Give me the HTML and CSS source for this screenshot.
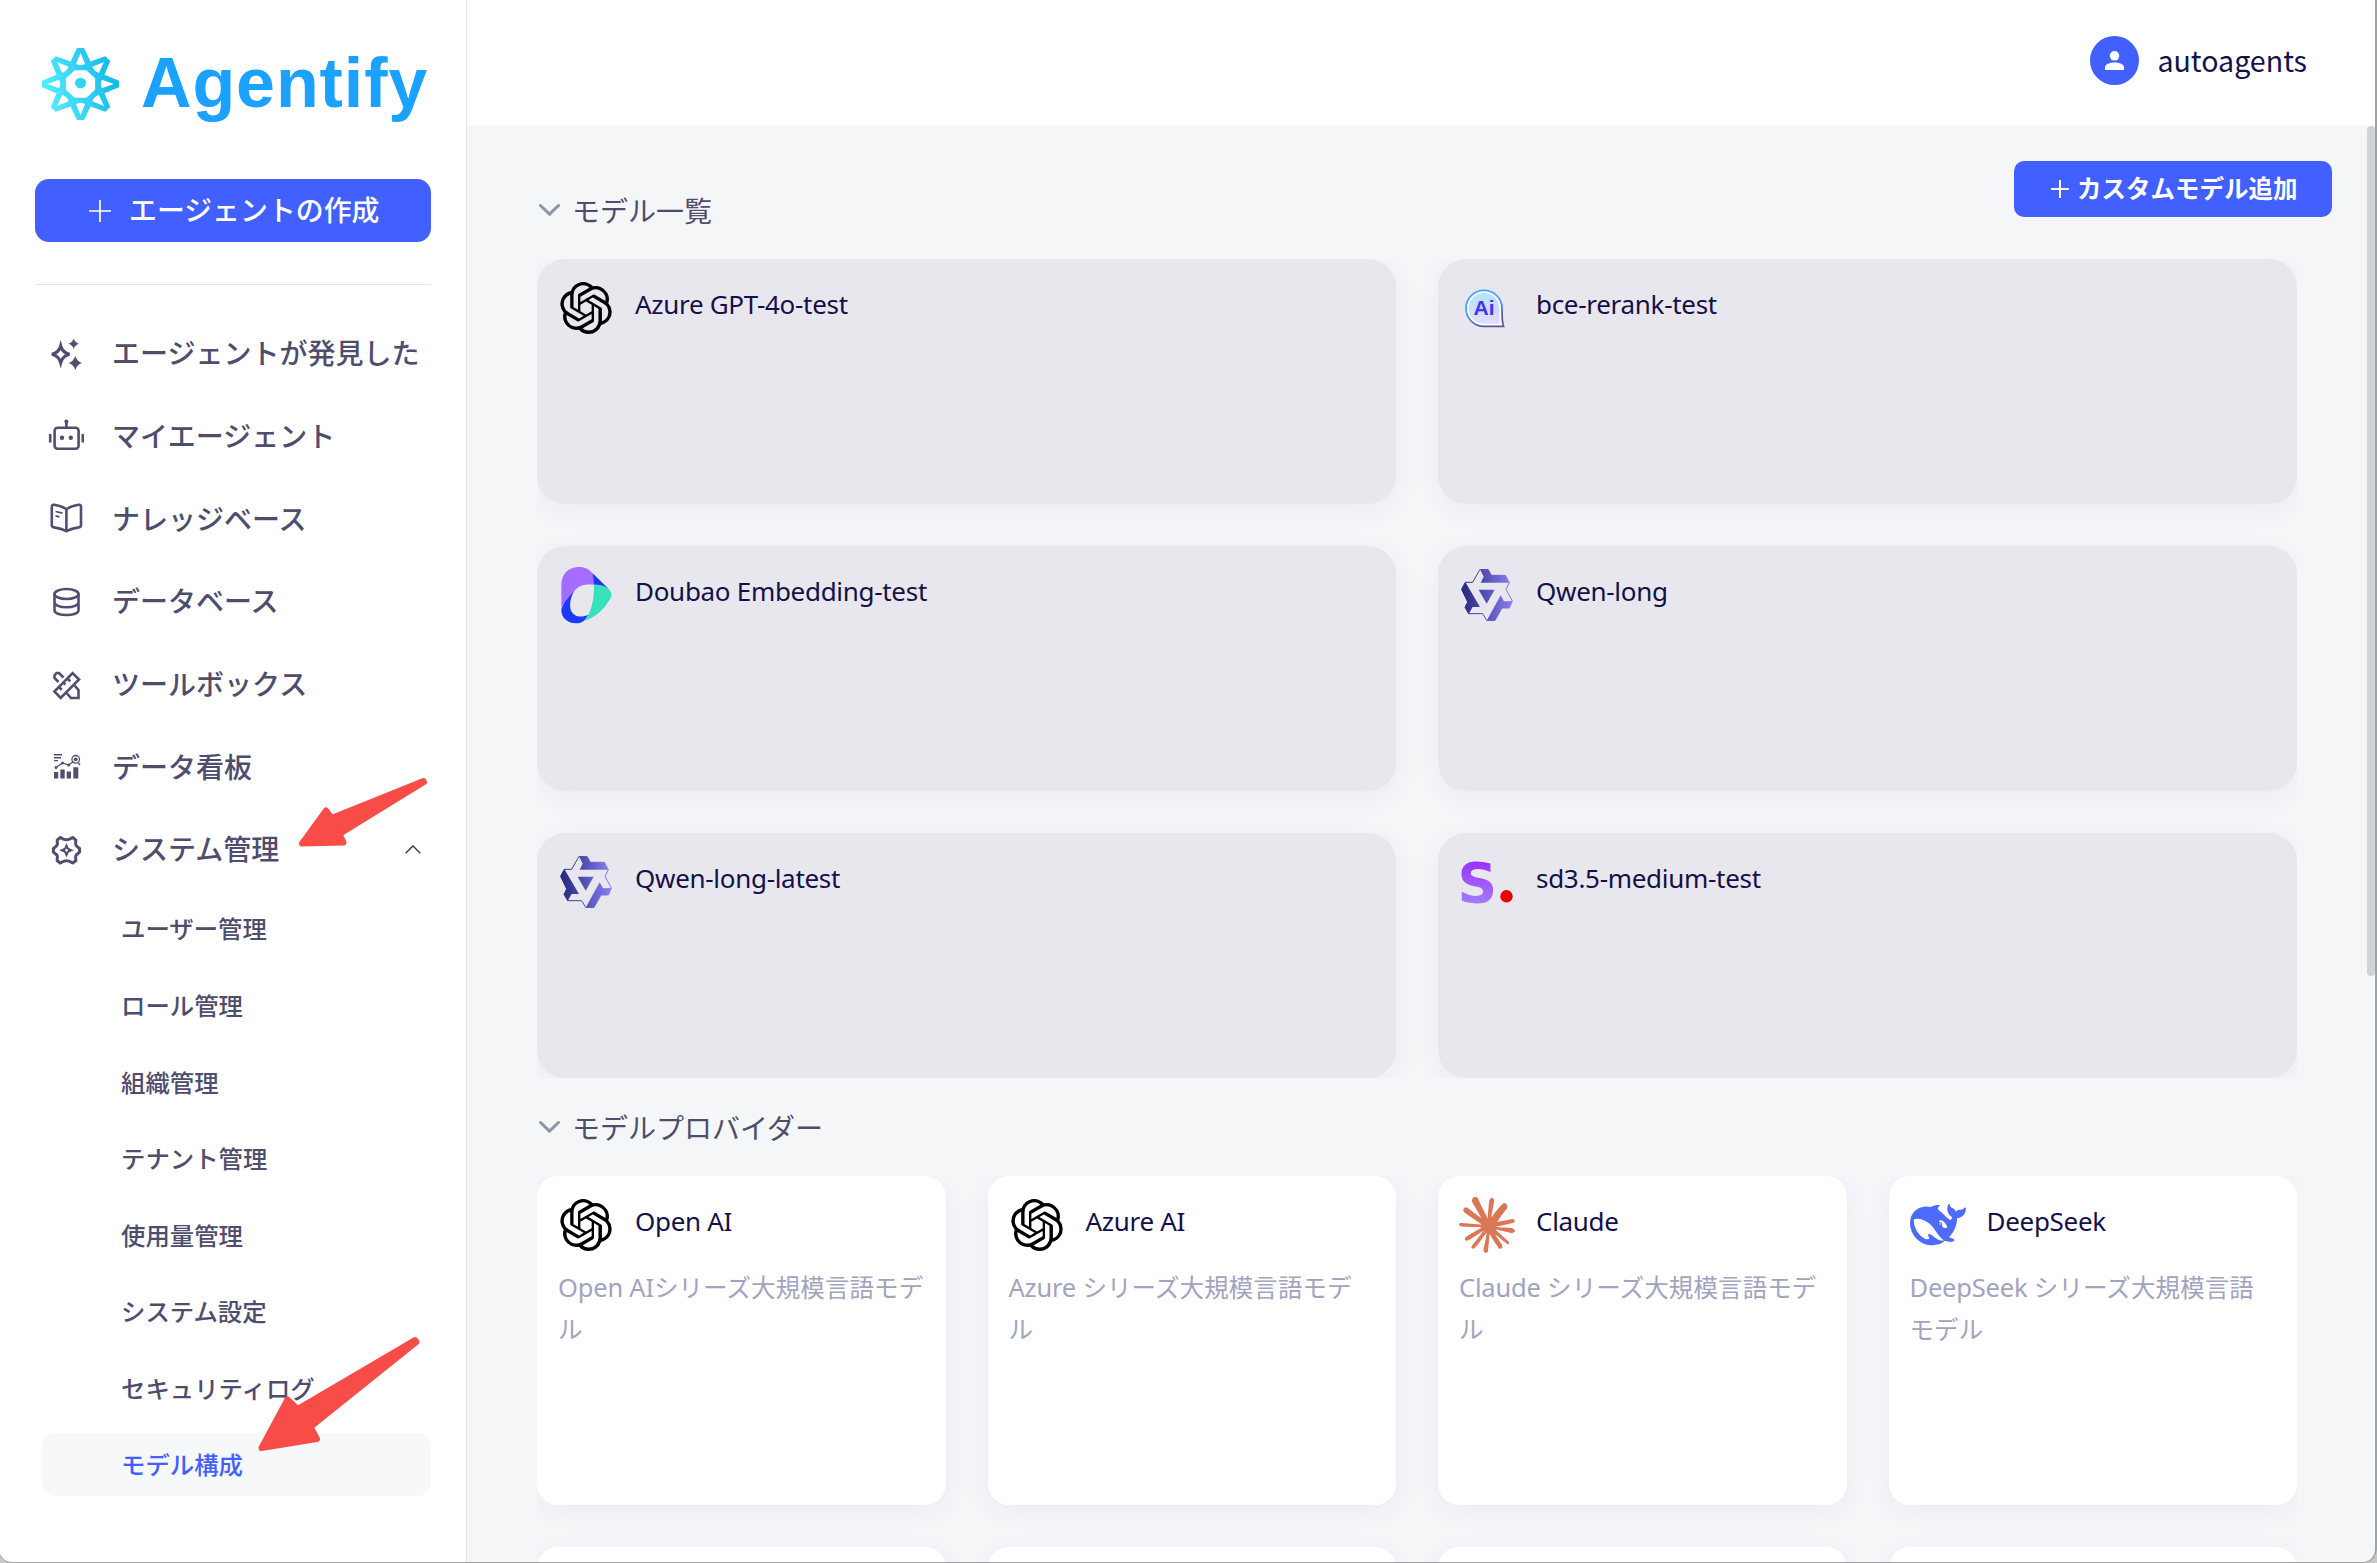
FILE: index.html
```html
<!DOCTYPE html>
<html lang="ja">
<head>
<meta charset="utf-8">
<title>Agentify</title>
<link rel="stylesheet" href="styles.css">
</head>
<body>
<svg class="defs" width="0" height="0" aria-hidden="true">
  <defs>
    <linearGradient id="qwenFill" gradientUnits="userSpaceOnUse" x1="0" y1="0" x2="154" y2="0"><stop offset="0" stop-color="#26277a"/><stop offset="0.5" stop-color="#5553b8"/><stop offset="1" stop-color="#8a82f6"/></linearGradient>
    <symbol id="openai" viewBox="0 0 24 24"><path d="M22.2819 9.8211a5.9847 5.9847 0 0 0-.5157-4.9108 6.0462 6.0462 0 0 0-6.5098-2.9A6.0651 6.0651 0 0 0 4.9807 4.1818a5.9847 5.9847 0 0 0-3.9977 2.9 6.0462 6.0462 0 0 0 .7427 7.0966 5.98 5.98 0 0 0 .511 4.9107 6.051 6.051 0 0 0 6.5146 2.9001A5.9847 5.9847 0 0 0 13.2599 24a6.0557 6.0557 0 0 0 5.7718-4.2058 5.9894 5.9894 0 0 0 3.9977-2.9001 6.0557 6.0557 0 0 0-.7475-7.0729zm-9.022 12.6081a4.4755 4.4755 0 0 1-2.8764-1.0408l.1419-.0804 4.7783-2.7582a.7948.7948 0 0 0 .3927-.6813v-6.7369l2.02 1.1686a.071.071 0 0 1 .038.052v5.5826a4.504 4.504 0 0 1-4.4945 4.4944zm-9.6607-4.1254a4.4708 4.4708 0 0 1-.5346-3.0137l.142.0852 4.783 2.7582a.7712.7712 0 0 0 .7806 0l5.8428-3.3685v2.3324a.0804.0804 0 0 1-.0332.0615L9.74 19.9502a4.4992 4.4992 0 0 1-6.1408-1.6464zM2.3408 7.8956a4.485 4.485 0 0 1 2.3655-1.9728V11.6a.7664.7664 0 0 0 .3879.6765l5.8144 3.3543-2.0201 1.1685a.0757.0757 0 0 1-.071 0l-4.8303-2.7865A4.504 4.504 0 0 1 2.3408 7.872zm16.5963 3.8558L13.1038 8.364 15.1192 7.2a.0757.0757 0 0 1 .071 0l4.8303 2.7913a4.4944 4.4944 0 0 1-.6765 8.1042v-5.6772a.79.79 0 0 0-.407-.667zm2.0107-3.0231l-.142-.0852-4.7735-2.7818a.7759.7759 0 0 0-.7854 0L9.409 9.2297V6.8974a.0662.0662 0 0 1 .0284-.0615l4.8303-2.7866a4.4992 4.4992 0 0 1 6.6802 4.66zM8.3065 12.863l-2.02-1.1638a.0804.0804 0 0 1-.038-.0567V6.0742a4.4992 4.4992 0 0 1 7.3757-3.4537l-.142.0805L8.704 5.459a.7948.7948 0 0 0-.3927.6813zm1.0976-2.3654l2.602-1.4998 2.6069 1.4998v2.9994l-2.5974 1.4997-2.6067-1.4997Z"/></symbol>
    <symbol id="qwen" viewBox="0 0 154 156">
      <path d="M56 1H80L90 19H132L144 41 134 61 153 96 144 117H122L101 154H76L64 134H22L11 115 19 99 1 61 12 40H34Z" fill="none" stroke="url(#qwenFill)" stroke-width="3"/>
      <path d="M56 1H80L90 19H132L144 41H58L67 23ZM0 61L12 39 56 114H34L22 135 11 115 19 99ZM118 79L128 97 154 96 144 117H122L101 155H76ZM52 62H100L76 104Z" fill="url(#qwenFill)"/>
    </symbol>
  </defs>
</svg>

<aside class="sidebar">
  <div class="brand">
    <svg class="brand-mark" viewBox="-36 -36 72 72" preserveAspectRatio="none">
      <defs>
        <linearGradient id="sun" gradientUnits="userSpaceOnUse" x1="-34" y1="10" x2="34" y2="-10"><stop offset="0" stop-color="#55eeff"/><stop offset="1" stop-color="#12b6ea"/></linearGradient>
        <path id="ray" fill-rule="evenodd" d="M-3.3-36H3.3L9.3-22.4 5.9-13.7H-5.9L-9.3-22.4ZM0-31L4.3-20Q0-18-4.3-20Z"/>
        <mask id="sunMask" maskUnits="userSpaceOnUse" x="-36" y="-36" width="72" height="72">
          <g fill="#fff"><use href="#ray"/><use href="#ray" transform="rotate(45)"/><use href="#ray" transform="rotate(90)"/><use href="#ray" transform="rotate(135)"/><use href="#ray" transform="rotate(180)"/><use href="#ray" transform="rotate(225)"/><use href="#ray" transform="rotate(270)"/><use href="#ray" transform="rotate(315)"/><circle cy="-1" r="5.2"/></g>
        </mask>
      </defs>
      <rect x="-36" y="-36" width="72" height="72" fill="url(#sun)" mask="url(#sunMask)"/>
    </svg>
    <span class="brand-name">Agentify</span>
  </div>

  <button class="create">
    <svg class="create-plus" viewBox="0 0 22 22"><path d="M11 0V22M0 11H22"/></svg>
    <span class="label">エージェントの作成</span>
  </button>

  <nav class="nav">
    <a class="nav-item">
      <svg class="nav-icon" viewBox="0 0 36 36"><path d="M12.700 10Q14.500 16.500 21.500 18.300 14.500 20.100 12.700 26.600 10.900 20.100 3.900 18.300 10.900 16.500 12.700 10Z" stroke-width="3.200"/><path class="solid" d="M25.700 2.500Q26.900 6.500 31 7.700 26.900 8.900 25.700 12.900 24.500 8.900 20.400 7.700 24.500 6.500 25.700 2.500ZM27.300 20Q29 25.300 34 27 29 28.700 27.300 34 25.600 28.700 20.600 27 25.600 25.300 27.300 20Z"/></svg>
      <span class="label">エージェントが発見した</span></a>
    <a class="nav-item">
      <svg class="nav-icon" viewBox="0 0 36 36"><rect x="6.600" y="8.800" width="24" height="21" rx="3"/><path d="M18.400 8V2.500M2.200 15V23.500M34.800 15V23.500" /><circle class="solid" cx="18.400" cy="2.500" r="2"/><circle class="solid" cx="14" cy="18.700" r="2.200"/><circle class="solid" cx="22.800" cy="18.700" r="2.200"/></svg>
      <span class="label">マイエージェント</span></a>
    <a class="nav-item">
      <svg class="nav-icon" viewBox="0 0 36 36"><path d="M18.400 8.200C14.500 5.500 10.500 4.500 6 3.800 4.500 3.600 3.800 4.500 3.800 6V24C3.800 25.500 4.500 26.200 6 26.400 10.500 27 14.500 28 18.400 30.200 22.300 28 26.300 27 30.800 26.400 32.300 26.200 33 25.500 33 24V6C33 4.500 32.300 3.600 30.800 3.800 26.300 4.500 22.300 5.500 18.400 8.200V30"/><path d="M7.500 10.500L14.500 12.200M7.500 14.800L11.500 15.800" stroke-width="1.800"/></svg>
      <span class="label">ナレッジベース</span></a>
    <a class="nav-item">
      <svg class="nav-icon" viewBox="0 0 36 36"><ellipse cx="18.500" cy="10" rx="12" ry="5"/><path d="M6.500 10V26.500C6.500 29 11.500 31 18.500 31S30.500 29 30.500 26.500V10M6.500 18.500C6.500 21 11.500 23.300 18.500 23.300S30.500 21 30.500 18.500"/></svg>
      <span class="label">データベース</span></a>
    <a class="nav-item">
      <svg class="nav-icon" viewBox="0 0 36 36"><path d="M24.700 6.200L31 12.500 12.700 30.800 6.400 24.500ZM11 20L13.800 22.800M15.400 15.600L17.400 17.600M19.500 11.500L22.300 14.300"/><path d="M10.500 15L6.500 11V8.500L8.500 6H11L15.500 10.500M26.500 18.500L30.500 23V31H23L19 26.500"/></svg>
      <span class="label">ツールボックス</span></a>
    <a class="nav-item">
      <svg class="nav-icon" viewBox="0 0 36 36"><path class="solid" d="M6 23H10.200V29.500H6ZM12.300 20.500H16.700V29.500H12.300ZM18.700 22.500H23V29.500H18.700ZM25.300 18.300H30.300V29.500H25.300Z"/><path d="M6 5.800H14M6 8.800H13M6 11.600H10" stroke-width="1.400"/><path d="M8 18.500L14.500 14 20.700 16 25.500 12.500M30.500 14L32 16" stroke-width="1.300"/><circle cx="27.700" cy="10.300" r="3.800" stroke-width="1.300"/><circle class="solid" cx="27.700" cy="10.300" r="1.900"/><circle class="solid" cx="8" cy="18.500" r="1.500"/><circle class="solid" cx="14.500" cy="14" r="1.500"/><circle class="solid" cx="20.700" cy="16" r="1.500"/></svg>
      <span class="label">データ看板</span></a>
    <a class="nav-item">
      <svg class="nav-icon" viewBox="0 0 36 36"><path d="M12.200 5.600C13.500 5.600 14.500 7.800 18.500 7.800S23.500 5.600 24.800 5.600L27.800 8C28 10 27 11.500 28 13.300S31 15.600 31.600 16.600V20C31 21 29 21.500 28 23.300S28 26.600 27.800 28.600L24.800 31C23.500 31 22.500 28.800 18.500 28.800S13.500 31 12.200 31L9.200 28.600C9 26.600 10 25.100 9 23.300S6 21 5.400 20V16.600C6 15.600 8 15.100 9 13.300S9 10 9.200 8Z" stroke-width="3"/><path class="solid" fill-rule="evenodd" d="M18.500 11L20.700 16.100 25.800 18.300 20.700 20.500 18.500 25.600 16.300 20.500 11.200 18.300 16.300 16.100ZM18.500 16.600L16.800 18.300 18.500 20 20.200 18.300Z"/></svg>
      <span class="label">システム管理</span>
      <svg class="nav-caret" viewBox="0 0 16 9"><path d="M0.700 8.300L8 1 15.300 8.300"/></svg></a>
  </nav>
  <div class="subnav">
    <a class="sub-item">ユーザー管理</a>
    <a class="sub-item">ロール管理</a>
    <a class="sub-item">組織管理</a>
    <a class="sub-item">テナント管理</a>
    <a class="sub-item">使用量管理</a>
    <a class="sub-item">システム設定</a>
    <a class="sub-item">セキュリティログ</a>
    <a class="sub-item active">モデル構成</a>
  </div>
</aside>

<div class="main">
  <header class="topbar">
    <svg class="avatar" viewBox="0 0 49 49"><circle cx="24.500" cy="24.500" r="24.500" fill="#4160ff"/><circle cx="24.500" cy="19.800" r="4.800" fill="#fff"/><path d="M15 34V31.500C15 28 19.500 26.500 24.500 26.500S34 28 34 31.500V34Z" fill="#fff"/></svg>
    <span class="user">autoagents</span>
  </header>
  <main class="content">
    <button class="add">
      <svg class="add-plus" viewBox="0 0 18 18"><path d="M9 0V18M0 9H18"/></svg>
      <span class="label">カスタムモデル追加</span>
    </button>
    <h2 class="section-title first"><svg class="chev" viewBox="0 0 21 12"><path d="M1.500 1.500L10.500 10.200 19.500 1.500"/></svg><span class="label">モデル一覧</span></h2>
    <div class="models">
      <article class="model"><svg class="logo glyph52"><use href="#openai"/></svg><h3 class="name">Azure GPT-4o-test</h3></article>
      <article class="model">
        <svg class="logo" viewBox="0 0 56 56"><defs><linearGradient id="aiEdge" x1="0" y1="0" x2=".5" y2="1"><stop offset="0" stop-color="#3aa2ff"/><stop offset=".5" stop-color="#4aa6fa"/><stop offset="1" stop-color="#5b55a0"/></linearGradient><linearGradient id="aiBg" x1="0" y1="0" x2="0" y2="1"><stop offset="0" stop-color="#b3e2fd"/><stop offset="1" stop-color="#e2dcfd"/></linearGradient></defs><path d="M25 10.300A18 18 0 0 0 25 46.300H44.500C43 43 43 40 43 28.300A18 18 0 0 0 25 10.300Z" fill="#fff" stroke="url(#aiEdge)" stroke-width="1.800"/><path d="M25 13A15.300 15.300 0 0 0 25 43.700H41C40.500 40 40.400 36 40.400 28.300A15.400 15.400 0 0 0 25 13Z" fill="url(#aiBg)"/><text x="14.500" y="35.300" class="ai-text">Ai</text></svg>
        <h3 class="name">bce-rerank-test</h3></article>
      <article class="model">
        <svg class="logo" viewBox="114 1190 168 168"><path fill="#a46dff" d="M124 1310V1245C124 1210 145 1190 178 1190 195 1190 207 1197 217 1208 222 1220 222 1235 222 1243 195 1240 175 1245 163 1262 145 1280 135 1295 124 1310Z"/><path fill="#1c39ff" d="M163 1262C145 1280 124 1305 124 1320 124 1345 145 1359 168 1359 185 1359 195 1352 205 1333 185 1343 160 1340 152 1318 148 1300 152 1280 163 1262ZM217 1208L267 1257C255 1248 240 1243 222 1243 222 1235 220 1220 217 1208Z"/><path fill="#38e1bd" d="M222 1243C245 1243 258 1248 267 1257 277 1268 275 1280 268 1290 250 1320 225 1342 192 1352 215 1325 222 1290 222 1243Z"/></svg>
        <h3 class="name">Doubao Embedding-test</h3></article>
      <article class="model"><svg class="logo glyph52"><use href="#qwen"/></svg><h3 class="name">Qwen-long</h3></article>
      <article class="model"><svg class="logo glyph52"><use href="#qwen"/></svg><h3 class="name">Qwen-long-latest</h3></article>
      <article class="model">
        <svg class="logo" viewBox="0 0 56 56"><defs><linearGradient id="sFill" x1="0" y1="0" x2="0" y2="1"><stop offset="0.200" stop-color="#9b35ff"/><stop offset="0.900" stop-color="#a585ff"/></linearGradient></defs><text x="-1.500" y="48" class="s-text" fill="url(#sFill)">S</text><circle cx="47.500" cy="42.300" r="6.200" fill="#e80000"/></svg>
        <h3 class="name">sd3.5-medium-test</h3></article>
    </div>

    <h2 class="section-title"><svg class="chev" viewBox="0 0 21 12"><path d="M1.500 1.500L10.500 10.200 19.500 1.500"/></svg><span class="label">モデルプロバイダー</span></h2>
    <div class="providers">
      <article class="provider"><div class="provider-head"><svg class="logo glyph52"><use href="#openai"/></svg><h3 class="name">Open AI</h3></div><p class="desc"><span class="lat">Open AI</span>シリーズ大規模言語モデ<br>ル</p></article>
      <article class="provider"><div class="provider-head"><svg class="logo glyph52"><use href="#openai"/></svg><h3 class="name">Azure AI</h3></div><p class="desc"><span class="lat">Azure </span>シリーズ大規模言語モデ<br>ル</p></article>
      <article class="provider"><div class="provider-head"><svg class="logo" viewBox="0 0 24 24"><path fill="#d97757" d="M4.709 15.955l4.720-2.647.080-.230-.080-.128H9.200l-.790-.048-2.698-.073-2.339-.097-2.266-.122-.571-.121L0 11.784l.055-.352.480-.321.686.060 1.520.103 2.278.158 1.652.097 2.449.255h.389l.055-.157-.134-.098-.103-.097-2.358-1.596-2.552-1.688-1.336-.972-.724-.491-.364-.462-.158-1.008.656-.722.881.060.225.061.893.686 1.908 1.476 2.491 1.833.365.304.145-.103.019-.073-.164-.274-1.355-2.446-1.446-2.490-.644-1.032-.170-.619a2.970 2.970 0 01-.104-.729L6.283.134 6.696 0l.996.134.420.364.620 1.414 1.002 2.229 1.555 3.030.456.898.243.832.091.255h.158V9.010l.128-1.706.237-2.095.230-2.695.080-.760.376-.910.747-.492.584.280.480.685-.067.444-.286 1.851-.559 2.903-.364 1.942h.212l.243-.242.985-1.306 1.652-2.064.730-.820.850-.904.547-.431h1.033l.760 1.129-.340 1.166-1.064 1.347-.881 1.142-1.264 1.700-.790 1.360.073.110.188-.020 2.856-.606 1.543-.280 1.841-.315.833.388.091.395-.328.807-1.969.486-2.309.462-3.439.813-.042.030.049.061 1.549.146.662.036h1.622l3.020.225.790.522.474.638-.079.485-1.215.620-1.640-.389-3.829-.910-1.312-.329h-.182v.110l1.093 1.068 2.006 1.810 2.509 2.330.127.578-.322.455-.340-.049-2.205-1.657-.851-.747-1.926-1.620h-.128v.170l.444.649 2.345 3.521.122 1.080-.170.353-.608.213-.668-.122-1.374-1.925-1.415-2.167-1.143-1.943-.140.080-.674 7.254-.316.370-.729.280-.607-.461-.322-.747.322-1.476.389-1.924.315-1.530.286-1.900.170-.632-.012-.042-.140.018-1.434 1.967-2.180 2.945-1.726 1.845-.414.164-.717-.370.067-.662.401-.589 2.388-3.036 1.440-1.882.930-1.086-.006-.158h-.055L4.132 18.560l-1.130.146-.487-.456.061-.746.231-.243 1.908-1.312-.006.006z"/></svg><h3 class="name">Claude</h3></div><p class="desc"><span class="lat">Claude </span>シリーズ大規模言語モデ<br>ル</p></article>
      <article class="provider"><div class="provider-head"><svg class="logo" viewBox="0 0 24 24"><path fill="#4d6bfe" d="M23.748 4.482c-.254-.124-.364.113-.512.234-.051.039-.094.090-.137.136-.372.397-.806.657-1.373.626-.829-.046-1.537.214-2.163.848-.133-.782-.575-1.248-1.247-1.548-.352-.156-.708-.311-.955-.650-.172-.241-.219-.510-.305-.774-.055-.160-.110-.323-.293-.350-.200-.031-.278.136-.356.276-.313.572-.434 1.202-.422 1.840.027 1.436.633 2.580 1.838 3.393.137.093.172.187.129.323-.082.280-.180.552-.266.833-.055.179-.137.217-.329.140a5.526 5.526 0 01-1.736-1.180c-.857-.828-1.631-1.742-2.597-2.458a11.365 11.365 0 00-.689-.471c-.985-.957.130-1.743.388-1.836.270-.098.093-.432-.779-.428-.872.004-1.670.295-2.687.684a3.055 3.055 0 01-.465.137 9.597 9.597 0 00-2.883-.102c-1.885.210-3.390 1.102-4.497 2.623C.082 8.606-.231 10.684.152 12.850c.403 2.284 1.569 4.175 3.360 5.653 1.858 1.533 3.997 2.284 6.438 2.140 1.482-.085 3.133-.284 4.994-1.860.470.234.962.327 1.780.397.630.059 1.236-.030 1.705-.128.735-.156.684-.837.419-.961-2.155-1.004-1.682-.595-2.113-.926 1.096-1.296 2.746-2.642 3.392-7.003.050-.347.007-.565 0-.845-.004-.170.035-.237.230-.256a4.173 4.173 0 001.545-.475c1.396-.763 1.960-2.015 2.093-3.517.020-.230-.004-.467-.247-.588zM11.581 18c-2.089-1.642-3.102-2.183-3.520-2.160-.392.024-.321.471-.235.763.090.288.207.486.371.739.114.167.192.416-.113.603-.673.416-1.842-.140-1.897-.167-1.361-.802-2.500-1.860-3.301-3.307-.774-1.393-1.224-2.887-1.298-4.482-.020-.386.093-.522.477-.592a4.696 4.696 0 011.529-.039c2.132.312 3.946 1.265 5.468 2.774.868.860 1.525 1.887 2.202 2.891.720 1.066 1.494 2.082 2.480 2.914.348.292.625.514.891.677-.802.090-2.140.110-3.054-.614zm1-6.440a.306.306 0 01.415-.287.302.302 0 01.200.288.306.306 0 01-.310.307.303.303 0 01-.304-.308zm3.110 1.596c-.200.081-.399.151-.590.160a1.245 1.245 0 01-.798-.254c-.274-.230-.470-.358-.552-.758a1.730 1.730 0 01.016-.588c.070-.327-.008-.537-.239-.727-.187-.156-.426-.199-.688-.199a.559.559 0 01-.254-.078c-.110-.054-.200-.190-.114-.358.028-.054.160-.186.192-.210.356-.202.767-.136 1.146.016.352.144.618.408 1.001.782.391.451.462.576.685.914.176.265.336.537.445.848.067.195-.019.354-.250.452z"/></svg><h3 class="name">DeepSeek</h3></div><p class="desc"><span class="lat">DeepSeek </span>シリーズ大規模言語<br>モデル</p></article>
      <article class="provider"></article>
      <article class="provider"></article>
      <article class="provider"></article>
      <article class="provider"></article>
    </div>
  </main>
</div>

<div class="scroll-thumb"></div>
<svg class="arrows" viewBox="0 0 466 1563">
  <path d="M302 843.500L326 810.500 331.500 818 423.500 781 424 782 339.500 834 343.500 842.500Z"/>
  <path d="M261.500 1448L287.500 1399.500 297.500 1409 415 1340 416.500 1342 310.500 1427 317 1439Z"/>
</svg>
<div class="window-edge"></div>
</body>
</html>
```
FILE: styles.css
```css
* { box-sizing: border-box; }

body {
  margin: 0;
  width: 2377px;
  height: 1563px;
  display: flex;
  overflow: hidden;
  position: relative;
  background: #f5f6f8;
  color: #4e4d6d;
  font-family: "Noto Sans CJK JP", sans-serif;
}

h2, h3, p { margin: 0; font-weight: 400; }
button { border: 0; font-family: inherit; color: #fff; background: #4160ff; }
.defs { position: absolute; }
.label { padding-bottom: 3px; }

/* Sidebar */
.sidebar {
  width: 467px;
  height: 1563px;
  flex: none;
  padding: 48px 35px 0;
  background: #fff;
  border-right: 1px solid #e5e6ea;
}

.brand { display: flex; height: 72px; padding-left: 7px; gap: 22px; }
.brand-mark { width: 77px; height: 72px; flex: none; }
.brand-name {
  font: 700 70px/70px "Liberation Sans", Arial, sans-serif;
  letter-spacing: 0.9px;
  color: #1ba1ff;
}

.create {
  display: flex;
  align-items: center;
  width: 396px;
  height: 63px;
  margin-top: 59px;
  padding: 0 0 0 54px;
  gap: 18px;
  border-radius: 14px;
  font-size: 27.9px;
  font-weight: 500;
}
.create-plus { width: 22px; height: 22px; }
.create-plus path { stroke: #fff; stroke-width: 1.7; }

.nav {
  margin-top: 42px;
  padding-top: 27.5px;
  border-top: 1px solid #e5e6ea;
}
.nav-item {
  display: flex;
  align-items: center;
  height: 82.7px;
  padding: 0 11px 0 13px;
  gap: 28px;
  font-size: 28px;
  font-weight: 500;
  white-space: nowrap;
}
.nav-icon { width: 36px; height: 36px; flex: none; fill: none; stroke: #504f70; stroke-width: 2.6; }
.nav-icon .solid { fill: #504f70; stroke: none; }
.nav-caret { width: 16px; height: 9px; margin: 0 -1px 0 auto; fill: none; stroke: #333; stroke-width: 1.3; }

.subnav { display: flex; flex-direction: column; gap: 13.6px; padding: 6px 0 0 7px; }
.sub-item {
  height: 63px;
  padding-left: 79px;
  border-radius: 14px;
  font-size: 24.4px;
  line-height: 62px;
  font-weight: 500;
}
.sub-item.active { color: #4160ff; background: #f7f8fa; }

/* Main column */
.main { flex: 1; min-width: 0; height: 1563px; overflow: hidden; }
.topbar {
  display: flex;
  align-items: center;
  justify-content: flex-end;
  height: 126px;
  padding: 0 70px 5px 0;
  gap: 18px;
  background: #fff;
}
.avatar { width: 49px; height: 49px; }
.user { padding-bottom: 2px; font-size: 28.6px; font-weight: 400; color: #14104a; }

.content { position: relative; padding: 0 80px 0 70px; }
.add {
  position: absolute;
  top: 35px;
  right: 45px;
  display: flex;
  align-items: center;
  width: 318px;
  height: 56px;
  padding: 0 0 0 37px;
  gap: 8px;
  border-radius: 10px;
  font-size: 24.5px;
  font-weight: 700;
  white-space: nowrap;
}
.add-plus { width: 18px; height: 18px; }
.add-plus path { stroke: #fff; stroke-width: 2; }

.section-title {
  display: flex;
  align-items: center;
  height: 98px;
  gap: 12px;
  padding-left: 2px;
  font-size: 28px;
  font-weight: 400;
}
.section-title.first { height: 133px; padding-top: 35px; }
.section-title .label { padding-bottom: 1px; }
.chev { width: 21px; height: 12px; fill: none; stroke: #8b95a7; stroke-width: 3; stroke-linecap: round; }

.models, .providers { display: grid; gap: 42px; width: 1760px; overflow: hidden; }
.models { grid-template-columns: repeat(2, 1fr); grid-auto-rows: 245px; }
.providers { grid-template-columns: repeat(4, 1fr); grid-auto-rows: 329px; }

.model, .provider { box-shadow: 0 6px 24px rgba(80, 60, 150, 0.06); padding: 21px; }
.model { display: flex; align-items: flex-start; gap: 21px; border-radius: 28px; background: #e8e7ed; }
.provider { border-radius: 21px; background: #fff; }
.provider-head { display: flex; gap: 21px; height: 56px; }

.logo { width: 56px; height: 56px; flex: none; overflow: visible; }
.glyph52 { padding: 2px; }
.name {
  font: 400 26px/48px "Noto Sans", sans-serif;
  letter-spacing: -0.3px;
  color: #14104a;
  white-space: nowrap;
}
.desc {
  margin-top: 13px;
  font-size: 24.5px;
  line-height: 41.5px;
  letter-spacing: 0.1px;
  color: #a1a3bf;
  white-space: nowrap;
}
.lat { font-family: "Noto Sans", sans-serif; font-size: 25.5px; line-height: 1; letter-spacing: -0.2px; white-space: pre; }
.ai-text { font: 700 21px "Liberation Sans", sans-serif; fill: #4a2ff5; }
.s-text { font: 700 55px "DejaVu Sans", sans-serif; }

/* Overlays */
.scroll-thumb {
  position: absolute;
  top: 126px;
  right: 2px;
  width: 8px;
  height: 850px;
  border-radius: 4px;
  background: #d2d3d6;
}
.arrows { position: absolute; left: 0; top: 0; width: 466px; height: 1563px; fill: #f74c47; stroke: #f74c47; stroke-width: 6; stroke-linejoin: round; }
.window-edge {
  position: absolute;
  inset: -2px 0 0 -2px;
  border: 1px solid #a2a2a2;
  border-right-width: 2px;
  border-radius: 0 0 14px 14px;
  box-shadow: 0 0 0 20px #c8c8c8;
}
```
